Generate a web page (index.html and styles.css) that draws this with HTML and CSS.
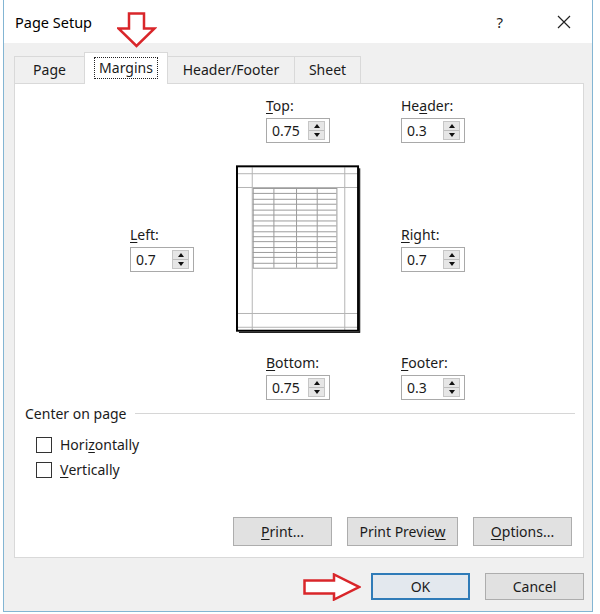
FILE: index.html
```html
<!DOCTYPE html>
<html>
<head>
<meta charset="utf-8">
<title>Page Setup</title>
<link rel="stylesheet" href="styles.css">
</head>
<body>
<div class="dialog">
	<div class="titlebar">
		<span class="title">Page Setup</span>
		<span class="help">?</span>
		<span class="close">
			<svg width="14" height="14" viewBox="0 0 14 14"><path d="M1 1L13 13M13 1L1 13" stroke="#222" stroke-width="1.2" fill="none"/></svg>
		</span>
	</div>

	<ul class="tabs">
		<li>Page</li>
		<li class="on"><span class="focus">Margins</span></li>
		<li>Header/Footer</li>
		<li>Sheet</li>
	</ul>

	<div class="panel">
		<div class="margins">
			<div class="field f-top">
				<label><u>T</u>op:</label>
				<div class="spin"><span class="val">0.75</span><span class="arrows"><i class="up"></i><i class="dn"></i></span></div>
			</div>
			<div class="field f-header">
				<label>He<u>a</u>der:</label>
				<div class="spin"><span class="val">0.3</span><span class="arrows"><i class="up"></i><i class="dn"></i></span></div>
			</div>
			<div class="field f-left">
				<label><u>L</u>eft:</label>
				<div class="spin"><span class="val">0.7</span><span class="arrows"><i class="up"></i><i class="dn"></i></span></div>
			</div>
			<div class="preview">
				<svg width="128" height="172" viewBox="0 0 128 172">
					<g stroke="#b4b4b4" stroke-width="1">
						<line x1="16.5" y1="2" x2="16.5" y2="168"/>
						<line x1="110.5" y1="2" x2="110.5" y2="168"/>
						<line x1="2" y1="8.5" x2="124" y2="8.5"/>
						<line x1="2" y1="22.5" x2="124" y2="22.5"/>
						<line x1="2" y1="150.5" x2="124" y2="150.5"/>
						<line x1="2" y1="164.5" x2="124" y2="164.5"/>
					</g>
					<g stroke="#9a9a9a" stroke-width="1">
						<rect x="17.5" y="23.5" width="85" height="81" fill="none"/>
						<line x1="38.5" y1="23" x2="38.5" y2="104"/>
						<line x1="61.5" y1="23" x2="61.5" y2="104"/>
						<line x1="82.5" y1="23" x2="82.5" y2="104"/>
						<line x1="17" y1="28.5" x2="102" y2="28.5"/>
						<line x1="17" y1="34.5" x2="102" y2="34.5"/>
						<line x1="17" y1="39.5" x2="102" y2="39.5"/>
						<line x1="17" y1="45.5" x2="102" y2="45.5"/>
						<line x1="17" y1="50.5" x2="102" y2="50.5"/>
						<line x1="17" y1="56.5" x2="102" y2="56.5"/>
						<line x1="17" y1="61.5" x2="102" y2="61.5"/>
						<line x1="17" y1="67.5" x2="102" y2="67.5"/>
						<line x1="17" y1="72.5" x2="102" y2="72.5"/>
						<line x1="17" y1="77.5" x2="102" y2="77.5"/>
						<line x1="17" y1="83.5" x2="102" y2="83.5"/>
						<line x1="17" y1="88.5" x2="102" y2="88.5"/>
						<line x1="17" y1="93.5" x2="102" y2="93.5"/>
						<line x1="17" y1="99.5" x2="102" y2="99.5"/>
					</g>
					<rect x="1" y="1" width="123" height="167" fill="none" stroke="#000" stroke-width="2"/>
					<line x1="125.5" y1="3" x2="125.5" y2="170" stroke="#222" stroke-width="1.5"/>
					<line x1="3" y1="169.5" x2="126" y2="169.5" stroke="#222" stroke-width="1.5"/>
				</svg>
			</div>
			<div class="field f-right">
				<label><u>R</u>ight:</label>
				<div class="spin"><span class="val">0.7</span><span class="arrows"><i class="up"></i><i class="dn"></i></span></div>
			</div>
			<div class="field f-bottom">
				<label><u>B</u>ottom:</label>
				<div class="spin"><span class="val">0.75</span><span class="arrows"><i class="up"></i><i class="dn"></i></span></div>
			</div>
			<div class="field f-footer">
				<label><u>F</u>ooter:</label>
				<div class="spin"><span class="val">0.3</span><span class="arrows"><i class="up"></i><i class="dn"></i></span></div>
			</div>
		</div>

		<div class="group">
			<div class="group-head"><span>Center on page</span><hr></div>
			<div class="check first"><span class="box"></span>Hori<u>z</u>ontally</div>
			<div class="check"><span class="box"></span><u>V</u>ertically</div>
		</div>

		<div class="panel-btns">
			<button class="btn"><u>P</u>rint...</button>
			<button class="btn wide">Print Previe<u>w</u></button>
			<button class="btn"><u>O</u>ptions...</button>
		</div>
	</div>

	<div class="footer">
		<button class="btn ok">OK</button>
		<button class="btn">Cancel</button>
	</div>

	<!-- red annotation arrows -->
	<svg class="arrow-down" width="40" height="36" viewBox="0 0 40 36">
		<path d="M12 1.5H27V16.5H37.5L19.5 34L1.5 16.5H12Z" fill="#fff" stroke="#d9262a" stroke-width="2.5" stroke-linejoin="miter"/>
	</svg>
	<svg class="arrow-right" width="58" height="28" viewBox="0 0 58 28">
		<path d="M1.5 7.5H31V1.5L56 14L31 26.5V20.5H1.5Z" fill="#fff" stroke="#d9262a" stroke-width="2.5"/>
	</svg>
</div>
</body>
</html>
```

FILE: styles.css
```css
body{margin:0;font-family:"Noto Sans","Liberation Sans",sans-serif;font-size:14px;color:#1b1b1b;
	background:#fff repeating-linear-gradient(to bottom,transparent 0,transparent 41px,#d4d4d4 41px,#d4d4d4 42px,transparent 42px,transparent 42px);
	background-size:100% 30px;background-position:0 12px;height:614px;overflow:hidden;}
ul{margin:0;padding:0;list-style:none;}
u{text-decoration:underline;text-underline-offset:2px;}

.dialog{position:relative;margin-left:3px;width:590px;height:612px;box-sizing:border-box;border:1px solid #83b5d3;border-top:none;background:#f0f0f0;display:flex;flex-direction:column;}

.titlebar{height:43px;background:#fff;display:flex;align-items:center;padding-left:11px;}
.title{font-size:14.5px;color:#000;}
.help{margin-left:auto;font-size:15px;margin-right:54px;color:#222;}
.close{width:14px;height:14px;margin-right:21px;display:flex;}

.tabs{display:flex;align-items:flex-end;height:31px;margin-top:9px;padding-left:10px;}
.tabs li{height:27px;box-sizing:border-box;border:1px solid #d9d9d9;border-bottom:none;border-right:none;display:flex;align-items:center;justify-content:center;padding:0 0 1px;}
.tabs li:nth-child(1){width:70px;}
.tabs li:nth-child(2){width:84px;}
.tabs li:nth-child(3){width:126px;}
.tabs li:nth-child(4){width:67px;border-right:1px solid #d9d9d9;}
.tabs li.on{height:32px;background:#fff;margin-bottom:-1px;position:relative;z-index:1;border-right:1px solid #d9d9d9;padding-bottom:2px;}
.tabs li.on + li{border-left:none;}
.focus{outline:1px dotted #222;outline-offset:0;padding:1px 4px;line-height:18px;}

.panel{margin:0 8px 0 10px;height:475px;box-sizing:border-box;border:1px solid #d9d9d9;background:#fff;display:flex;flex-direction:column;}

.margins{display:grid;grid-template-columns:106px 126px 39px 64px;grid-template-rows:auto 168px auto;row-gap:21px;padding:12px 0 0 115px;}
.field{display:flex;flex-direction:column;align-items:flex-start;}
.field label{line-height:20px;margin-bottom:2px;}
.f-top{grid-column:2;grid-row:1;justify-self:start;margin-left:30px;}
.f-header{grid-column:4;grid-row:1;}
.f-left{grid-column:1;grid-row:2;align-self:center;}
.preview{grid-column:2;grid-row:2;display:flex;}
.f-right{grid-column:4;grid-row:2;align-self:center;}
.f-bottom{grid-column:2;grid-row:3;margin-left:30px;}
.f-footer{grid-column:4;grid-row:3;}

.spin{display:flex;align-items:center;width:64px;height:25px;box-sizing:border-box;border:1px solid #a9a9a9;padding:0 4px 0 5px;}
.val{flex:1;font-size:14px;}
.arrows{width:17px;height:19px;box-sizing:border-box;border:1px solid #c6c6c6;background:#e6e6e6;display:flex;flex-direction:column;}
.arrows i{flex:1;display:flex;align-items:center;justify-content:center;}
.arrows i.up{border-bottom:1px solid #bdbdbd;}
.arrows i::before{content:"";width:0;height:0;border-left:3.5px solid transparent;border-right:3.5px solid transparent;}
.arrows i.up::before{border-bottom:4px solid #111;}
.arrows i.dn::before{border-top:4px solid #111;}

.group{margin-top:2px;padding:0 8px 0 10px;}
.group-head{display:flex;align-items:center;height:22px;}
.group-head hr{flex:1;margin:0 0 0 8px;border:none;border-top:1px solid #d6d6d6;}
.check{display:flex;align-items:center;height:25px;padding-left:11px;}
.check.first{margin-top:8px;}
.box{width:16px;height:16px;box-sizing:border-box;border:1px solid #333;margin-right:8px;background:#fff;}

.panel-btns{margin-top:auto;display:flex;justify-content:flex-end;gap:15px;padding:0 11px 11px 0;}
.btn{font-family:inherit;font-size:14px;color:#1b1b1b;width:99px;height:29px;box-sizing:border-box;border:1px solid #adadad;background:#e1e1e1;padding:0;}
.btn.wide{width:111px;}

.footer{display:flex;justify-content:flex-end;gap:15px;margin-top:15px;padding-right:8px;}
.footer .btn{height:27px;}
.btn.ok{border:2px solid #2f7bb8;background:#e3e8ee;}

.arrow-down{position:absolute;left:113px;top:12px;}
.arrow-right{position:absolute;left:299px;top:573px;}
```
